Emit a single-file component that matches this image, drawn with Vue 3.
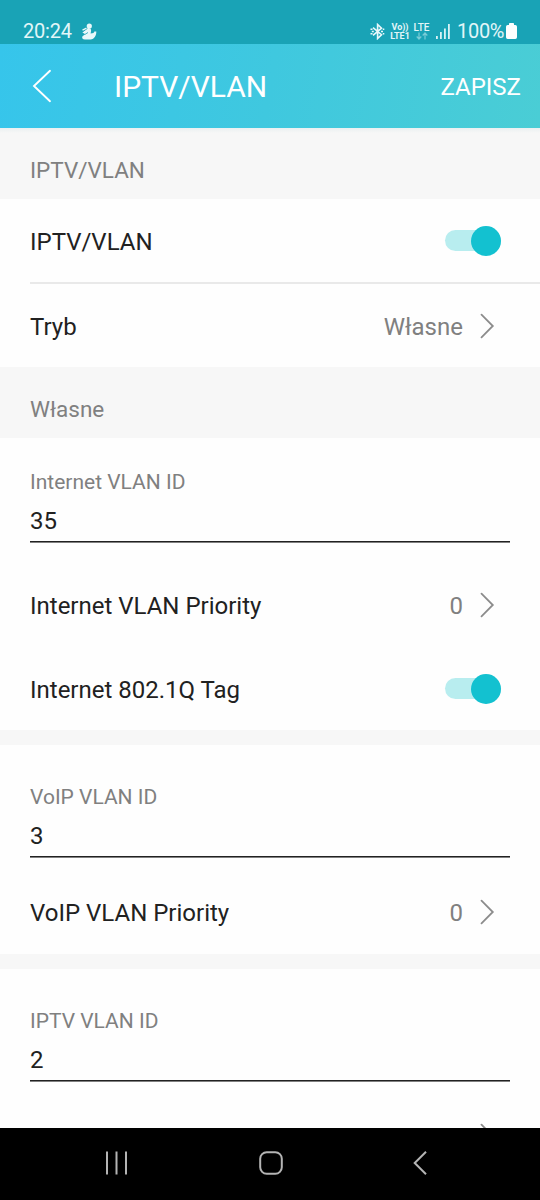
<script setup>
const groups = [
  { label: 'Internet VLAN ID', value: '35', priority: 'Internet VLAN Priority', tag: 'Internet 802.1Q Tag' },
  { label: 'VoIP VLAN ID', value: '3', priority: 'VoIP VLAN Priority' },
  { label: 'IPTV VLAN ID', value: '2', priority: 'IPTV VLAN Priority' },
]
</script>

<template>
  <div class="screen">
    <div class="status">
      <span class="time">20:24</span>
      <svg class="figure" width="16" height="18" viewBox="0 0 16 18">
        <circle cx="8.3" cy="3" r="2.6" fill="#e9f8fa" />
        <path d="M7 5C9 4.600 10.300 6 10.100 8L9.600 10.500C12 10.500 13.300 9.500 13.300 8.500L15.300 8.600C15.500 12 13.500 16.600 9.500 16.600H4C1.600 16.500.5 14.800 1.500 13.300L4.300 11.300 1.400 9.400Z" fill="#e9f8fa" />
        <path d="M1.800 8.500 5.800 5.800M4 11.400 7 9.500" fill="none" stroke="#19a3b6" stroke-width=".8" />
        <path d="M1.500 7.200 5.500 5.200" stroke="#e9f8fa" stroke-width="1.500" />
      </svg>
      <div class="indicators">
        <svg width="15" height="17" viewBox="0 0 15 17" fill="none" stroke="#e9f8fa" stroke-width="1.600">
          <path d="M3 4.700 11.500 11.700 7.600 15.500V1.500L11.500 5.200 3 12.300" />
          <path d="M.5 6.200h2M.5 10.800h2M1.800 8.500h2M11 8.500h2M12.800 6.300h1.500M12.800 10.700h1.500" />
        </svg>
        <div class="volte"><span>Vo))</span><span>LTE1</span></div>
        <div class="lte">
          <span>LTE</span>
          <svg width="12" height="8" viewBox="0 0 12 8" fill="none" stroke="#78ccd7" stroke-width="1.200">
            <path d="M3 .5V7M.7 4.500 3 7 5.300 4.500M9 7.500V1M6.700 3.500 9 1 11.300 3.500" />
          </svg>
        </div>
        <svg class="signal" width="15" height="15" viewBox="0 0 15 15" fill="#d9f2f5">
          <rect x="0" y="12" width="1.800" height="3" /><rect x="4" y="8" width="1.800" height="7" />
          <rect x="8" y="4.500" width="1.800" height="10.500" /><rect x="12" y="0" width="1.800" height="15" />
        </svg>
        <span class="percent">100%</span>
        <svg class="battery" width="11" height="16" viewBox="0 0 11 16" fill="#fff">
          <path d="M3 2V.8Q3 0 3.800 0H7.200Q8 0 8 .8V2H9.300Q11 2 11 3.700V14.300Q11 16 9.300 16H1.700Q0 16 0 14.300V3.700Q0 2 1.700 2Z" />
        </svg>
      </div>
    </div>

    <header class="header">
      <svg class="back" width="20" height="34" viewBox="0 0 20 34" fill="none" stroke="#fff" stroke-width="1.900" stroke-linecap="round">
        <path d="M18 1.800 2 17 18 32.200" />
      </svg>
      <h1>IPTV/VLAN</h1>
      <span class="save">ZAPISZ</span>
    </header>

    <main class="content">
      <div class="section first">IPTV/VLAN</div>
      <div class="row">
        <span class="name">IPTV/VLAN</span>
        <span class="toggle"><i></i></span>
      </div>
      <div class="divider"></div>
      <div class="row mode">
        <span class="name">Tryb</span>
        <span class="value">Własne</span>
        <svg class="chevron" width="16" height="26" viewBox="0 0 16 26"><path d="M1.500 1.700 12.800 13 1.500 24.300" /></svg>
      </div>
      <div class="section">Własne</div>

      <section v-for="group in groups" :key="group.label" class="group">
        <div class="field">
          <div class="label">{{ group.label }}</div>
          <div class="input">{{ group.value }}</div>
        </div>
        <div class="row">
          <span class="name">{{ group.priority }}</span>
          <span class="value">0</span>
          <svg class="chevron" width="16" height="26" viewBox="0 0 16 26"><path d="M1.500 1.700 12.800 13 1.500 24.300" /></svg>
        </div>
        <div v-if="group.tag" class="row tag">
          <span class="name">{{ group.tag }}</span>
          <span class="toggle"><i></i></span>
        </div>
      </section>
    </main>

    <nav class="nav">
      <svg width="22" height="24" viewBox="0 0 22 24" fill="none" stroke="#b4b4b4" stroke-width="2">
        <path d="M1 .5V23.500M10.500 .5V23.500M20 .5V23.500" />
      </svg>
      <svg width="24" height="24" viewBox="0 0 24 24" fill="none" stroke="#b4b4b4" stroke-width="2">
        <rect x="1.200" y="1.200" width="21.600" height="21.600" rx="6.500" />
      </svg>
      <svg width="14" height="24" viewBox="0 0 14 24" fill="none" stroke="#b4b4b4" stroke-width="2">
        <path d="M13 .8 1.700 12 13 23.200" />
      </svg>
    </nav>
  </div>
</template>

<style>
html, body { margin: 0; background: #fff; }
</style>

<style scoped>
.screen {
  width: 540px;
  height: 1200px;
  overflow: hidden;
  display: flex;
  flex-direction: column;
  background: #fefefe;
  font-family: Roboto, "Liberation Sans", sans-serif;
  color: #212121;
}
.status {
  flex: none;
  height: 44px;
  box-sizing: border-box;
  padding: 19px 23px 0;
  display: flex;
  background: #19a3b6;
  color: #e2f6f8;
  line-height: 24px;
}
.time { width: 58px; font-size: 20px; letter-spacing: -0.2px; }
.figure { margin-top: 4px; }
.indicators { display: flex; margin-left: auto; padding-top: 4px; }
.volte, .lte {
  display: flex;
  flex-direction: column;
  align-items: center;
  font-size: 9px;
  line-height: 9px;
  font-weight: 700;
}
.volte { width: 20px; margin-left: 5px; }
.lte { width: 17px; margin-left: 3px; font-size: 10px; font-weight: 500; }
.signal { margin: 1px 0 0 6px; }
.percent { width: 47px; margin: -4px 0 0 6px; font-size: 20px; letter-spacing: -0.3px; }
.battery { margin-left: 2px; }
.header {
  flex: none;
  height: 84px;
  box-sizing: border-box;
  padding: 0 19px 0 32px;
  display: flex;
  align-items: center;
  color: #fff;
  background: linear-gradient(100deg, #36c5eb 0%, #3fc8df 50%, #4acdd5 100%);
}
h1 { margin: 2px 0 0 62px; font-size: 30px; line-height: 36px; font-weight: 400; }
.save { margin: 2px 0 0 auto; font-size: 24px; }
.content { flex: 1; min-height: 0; overflow: hidden; }
.section {
  height: 71px;
  box-sizing: border-box;
  padding: 13px 30px 0;
  background: #f7f7f7;
  color: #808080;
  font-size: 22.5px;
  line-height: 58px;
}
.first { background: linear-gradient(#eaf0f1, #f7f7f7 5px); }
.row {
  height: 84px;
  box-sizing: border-box;
  padding: 0 39px 0 30px;
  display: flex;
  align-items: center;
  font-size: 24px;
}
.row .name, .row .value { padding-top: 2px; }
.row:not(.tag) { height: 84px; }
.content > .row { height: 83px; }
.tag { height: 83px; }
.value { margin-left: auto; color: #808080; }
.divider { height: 2px; margin-left: 30px; background: #e9e9e9; }
.chevron {
  margin: 0 5px 0 17px;
  fill: none;
  stroke: #8c8c8c;
  stroke-width: 1.8;
  stroke-linecap: round;
}
.toggle {
  width: 56px;
  height: 21px;
  margin-left: auto;
  display: flex;
  align-items: center;
  justify-content: flex-end;
  border-radius: 11px;
  background: #b8edef;
}
.toggle i { flex: none; width: 30px; height: 30px; border-radius: 50%; background: #13c1d0; }
.group + .group { border-top: 15px solid #f7f7f7; }
.field { height: 125px; box-sizing: border-box; padding: 38px 30px 0; }
.group:first-of-type .field { padding-top: 30px; }
.label { font-size: 21px; line-height: 28px; color: #808080; }
.input {
  margin-top: 11px;
  padding-bottom: 8px;
  font-size: 24px;
  line-height: 28px;
  background: linear-gradient(#212121 1px, #808080 1px) bottom / 100% 2px no-repeat;
}
.nav {
  flex: none;
  height: 72px;
  box-sizing: border-box;
  padding: 0 113px 3px 106px;
  display: flex;
  align-items: center;
  justify-content: space-between;
  background: #000;
}
</style>
